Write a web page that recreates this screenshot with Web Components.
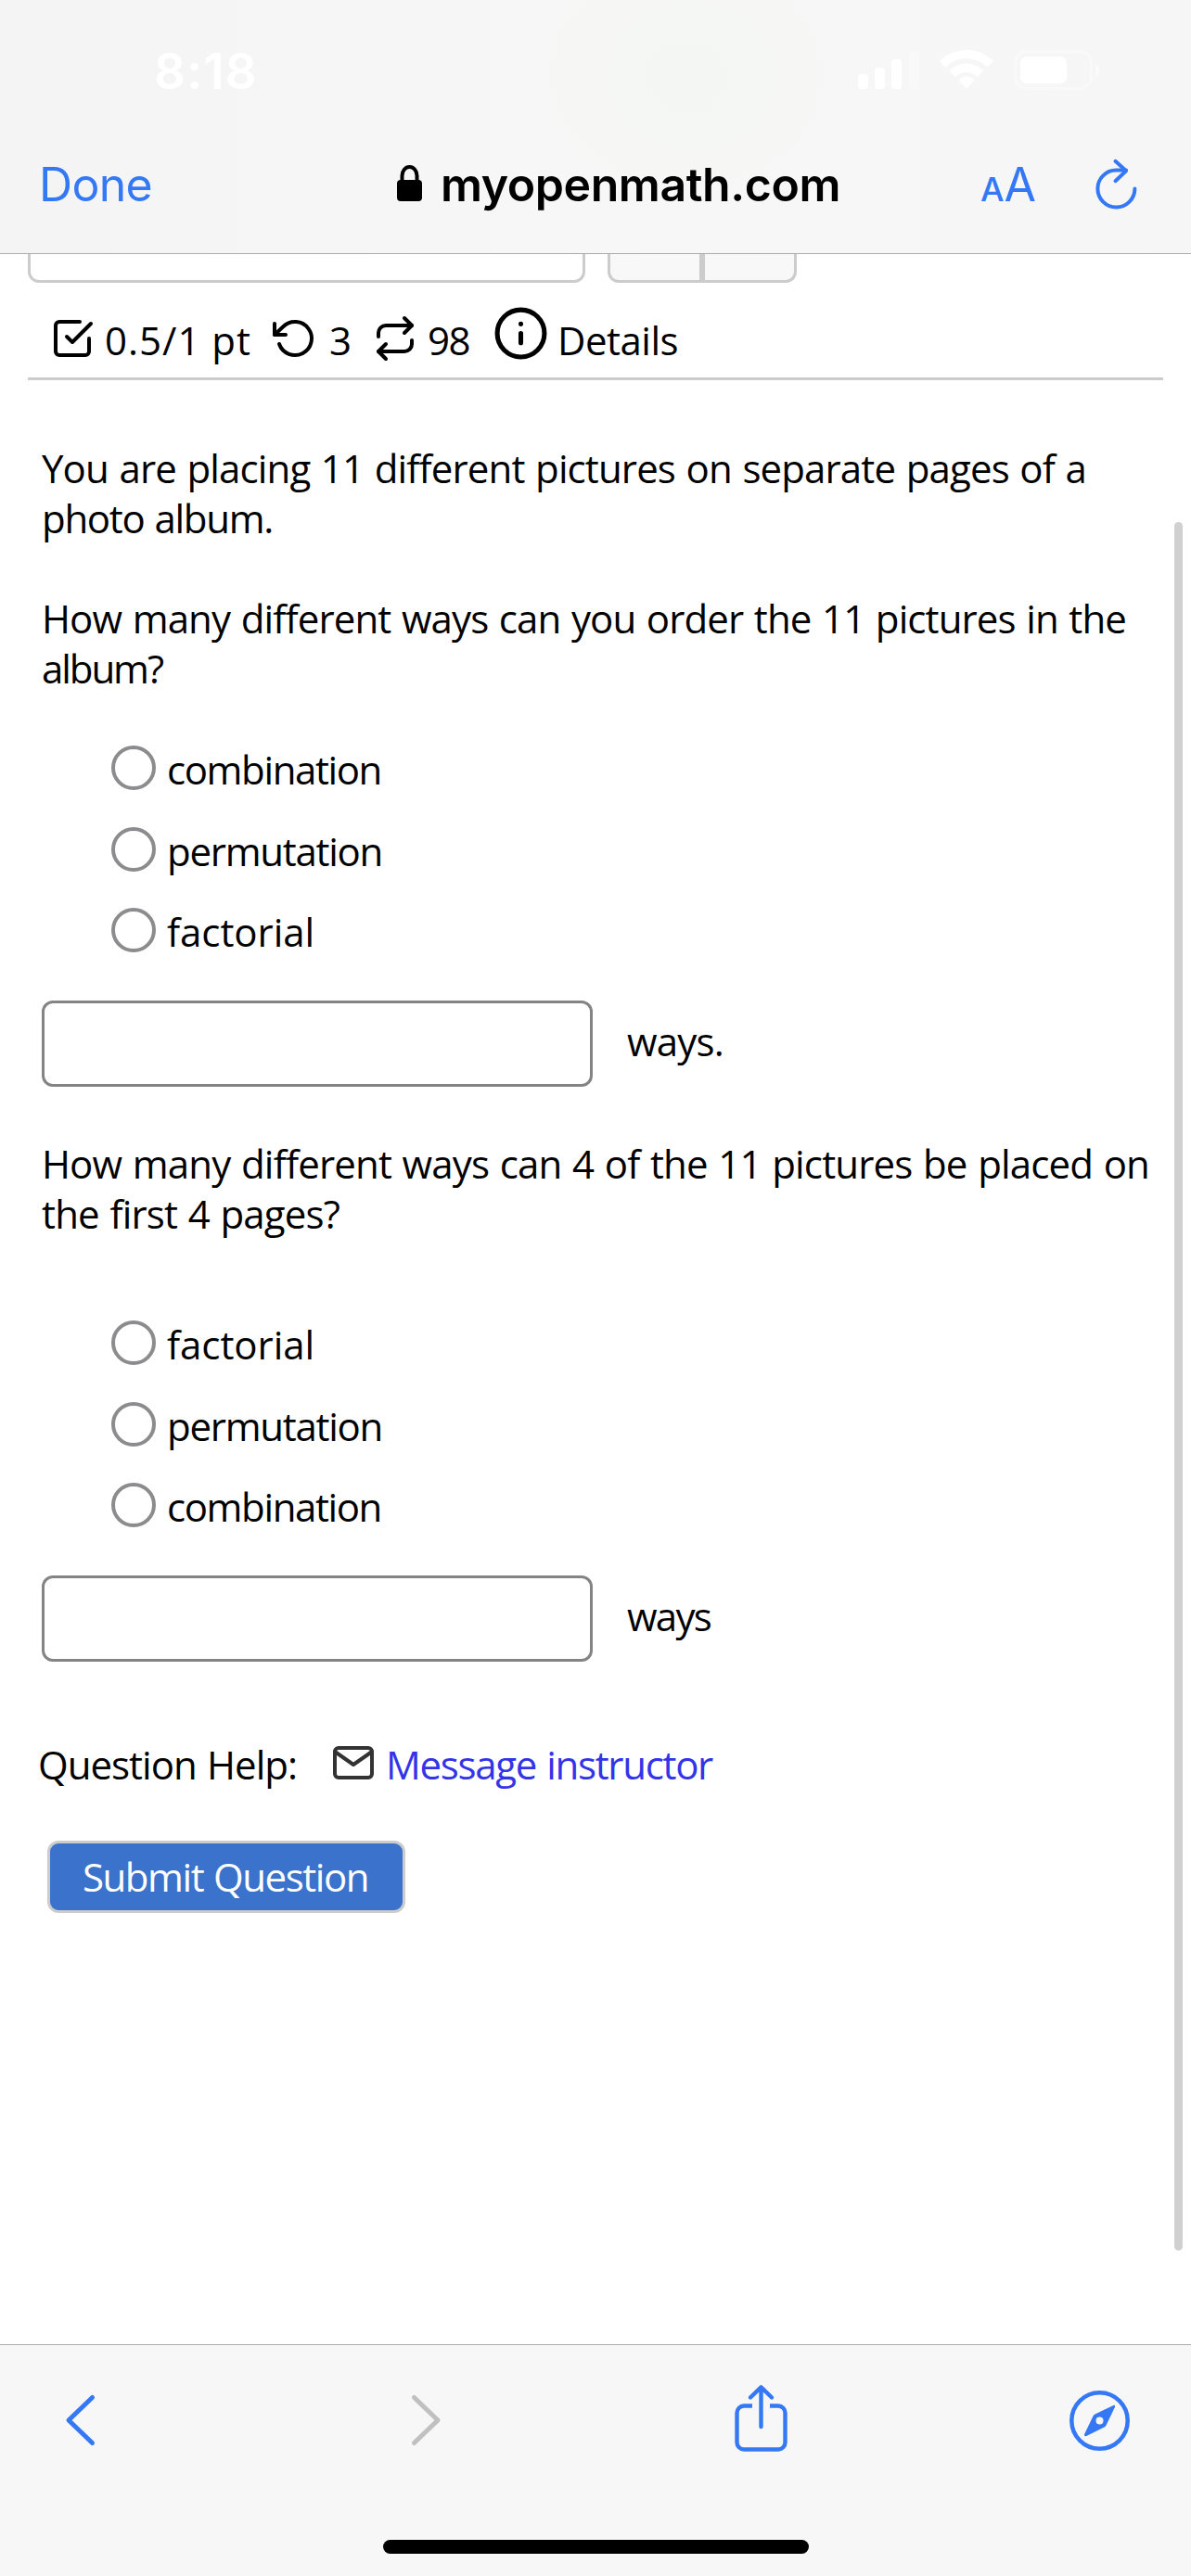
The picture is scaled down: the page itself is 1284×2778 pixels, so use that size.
<!DOCTYPE html>
<html lang="en">
<head>
<meta charset="utf-8">
<meta name="viewport" content="width=device-width, initial-scale=1">
<title>myopenmath.com</title>
<style>
  html, body {
    margin: 0;
    height: 100%;
    overflow: hidden;
    background: #fff;
  }
</style>
</head>
<body>
<browser-sheet>
  <browser-bar slot="top" time="8:18" site="myopenmath.com"></browser-bar>

  <question-picker></question-picker>
  <score-bar></score-bar>

  <question-text gap="68">
    <text-run width="1126">You are placing 11 different pictures on separate pages of a</text-run>
    <text-run width="249">photo album.</text-run>
  </question-text>
  <question-text gap="54">
    <text-run width="1169">How many different ways can you order the 11 pictures in the</text-run>
    <text-run width="130">album?</text-run>
  </question-text>
  <answer-choices gap="55">
    <answer-choice width="231">combination</answer-choice>
    <answer-choice width="232">permutation</answer-choice>
    <answer-choice width="159">factorial</answer-choice>
  </answer-choices>
  <answer-box><text-run width="104">ways.</text-run></answer-box>

  <question-text gap="56">
    <text-run width="1194">How many different ways can 4 of the 11 pictures be placed on</text-run>
    <text-run width="321">the first 4 pages?</text-run>
  </question-text>
  <answer-choices gap="87">
    <answer-choice width="159">factorial</answer-choice>
    <answer-choice width="232">permutation</answer-choice>
    <answer-choice width="231">combination</answer-choice>
  </answer-choices>
  <answer-box><text-run width="90">ways</text-run></answer-box>

  <question-help></question-help>
  <submit-button><text-run width="308">Submit Question</text-run></submit-button>

  <browser-toolbar slot="bottom"></browser-toolbar>
</browser-sheet>

<script>
const define = (name, html, setup) => {
  const template = document.createElement('template')
  template.innerHTML = html
  customElements.define(name, class extends HTMLElement {
    constructor() {
      super()
      this.attachShadow({ mode: 'open' }).appendChild(template.content.cloneNode(true))
    }

    $(selector) {
      return this.shadowRoot.querySelector(selector)
    }

    connectedCallback() {
      if (setup) setup(this)
    }
  })
}

const setGap = (el) => {
  el.style.paddingTop = el.getAttribute('gap') + 'px'
}

const ICONS = {
  check: ['0 0 24 24', 2, '<path d="M9 11l3 3L22 4"/><path d="M21 12v7a2 2 0 0 1-2 2H5a2 2 0 0 1-2-2V5a2 2 0 0 1 2-2h11"/>'],
  undo: ['0 0 24 24', 2, '<path d="M1 4v6h6"/><path d="M3.51 15a9 9 0 1 0 2.13-9.36L1 10"/>'],
  repeat: ['0 0 24 24', 2, '<path d="M17 1l4 4-4 4"/><path d="M3 11V9a4 4 0 0 1 4-4h14"/><path d="M7 23l-4-4 4-4"/><path d="M21 13v2a4 4 0 0 1-4 4H3"/>'],
  info: ['0 0 24 24', 2, '<circle cx="12" cy="12" r="10"/><path d="M12 16v-4M12 8h.01"/>'],
  mail: ['0 0 24 24', 2, '<path d="M4 4h16a2 2 0 0 1 2 2v12a2 2 0 0 1-2 2H4a2 2 0 0 1-2-2V6a2 2 0 0 1 2-2z"/><path d="M22 6l-10 7L2 6"/>'],
  lock: ['0 0 27 39', 4, '<path d="M5.5 18V11.500a8 9.500 0 0 1 16 0V18"/><rect x="0" y="16" width="27" height="23" rx="4" fill="currentColor" stroke="none"/>'],
  reload: ['0 0 48 56', 4, '<path d="M42.400 31.500a20 20 0 1 1-20-20H33"/><path d="M21.500 1.800L33 12.200L21.500 23.200"/>'],
  back: ['0 0 31 54', 5, '<path d="M28.500 2.500L3 27l25.500 24.500"/>'],
  forward: ['0 0 31 54', 5, '<path d="M2.500 2.500L28 27L2.500 51.500"/>'],
  share: ['0 0 57 72', 4.4, '<path stroke-linecap="butt" d="M19 22.500H10a7.500 7.500 0 0 0-7.500 7.500V62a7.500 7.500 0 0 0 7.500 7.500H47A7.500 7.500 0 0 0 54.500 62V30A7.500 7.500 0 0 0 47 22.500H38"/><path d="M28.500 45V3M17 13.500L28.500 2.300L40 13.500"/>'],
  compass: ['0 0 65 65', 4.500, '<circle cx="32.500" cy="32.500" r="30.200"/><path fill="currentColor" stroke="none" fill-rule="evenodd" d="M47.300 15.900Q49.600 15.200 49 17.700L39.500 37.500Q39 38.600 38 39.200L18.300 49Q15.500 49.700 16 47.200L25.500 27.500Q26 26.400 27 25.800ZM32.500 28.500a4 4 0 1 0 0 8a4 4 0 1 0 0-8Z"/>'],
  signal: ['0 0 66 42', 0, '<g fill="currentColor"><rect y="26" width="11" height="16" rx="3"/><rect x="18" y="19" width="11" height="23" rx="3"/><rect x="36" y="10" width="11" height="32" rx="3"/><rect x="55" y="1" width="11" height="41" rx="3" opacity=".3"/></g>'],
  wifi: ['0 0 58 42', 0, '<g fill="currentColor"><path d="M29 0C41 0 50.500 4.500 58 12L51.500 18.500C45 12.500 38 9 29 9S13 12.500 6.500 18.500L0 12C7.500 4.500 17 0 29 0Z"/><path d="M29 14.500c7.500 0 13.500 3 18.500 7.700L41 29c-3.500-3.500-7-5-12-5s-8.500 1.500-12 5l-6.500-6.800C15.500 17.500 21.500 14.500 29 14.500Z"/><path d="M29 28.500c3.500 0 6 1.500 8.500 4L29 42l-8.500-9.500c2.500-2.500 5-4 8.500-4Z"/></g>'],
  battery: ['0 0 94 43', 3, '<rect x="1.500" y="1.500" width="82" height="40" rx="12" opacity=".4"/><path d="M88 15q5 2 5 6.500t-5 6.500Z" fill="currentColor" stroke="none" opacity=".5"/><rect x="7" y="7" width="50" height="29" rx="7" fill="currentColor" stroke="none"/>']
}

define('line-icon', `
  <style>
    :host { display: block; flex: none; }
    svg {
      display: block;
      width: 100%;
      height: 100%;
      overflow: visible;
      fill: none;
      stroke: currentColor;
      stroke-linecap: round;
      stroke-linejoin: round;
    }
  </style>
  <svg xmlns="http://www.w3.org/2000/svg"></svg>
`, (el) => {
  const [viewBox, stroke, shapes] = ICONS[el.getAttribute('name')]
  const svg = el.$('svg')
  svg.setAttribute('viewBox', viewBox)
  svg.setAttribute('stroke-width', stroke)
  svg.innerHTML = shapes
  const [, , w, h] = viewBox.split(' ')
  const size = el.getAttribute('size')
  el.style.width = (size || w) + 'px'
  el.style.height = (size || h) + 'px'
})

define('browser-sheet', `
  <style>
    :host {
      display: flex;
      flex-direction: column;
      position: relative;
      height: 2778px;
      background: #fff;
      color: #000;
      font: 42px/54px "Trebuchet MS", "Open Sans", sans-serif;
      word-spacing: 1.500px;
    }
    main { flex: 1; min-height: 0; }
    /* overlay scroll indicator */
    .thumb {
      position: absolute;
      top: 563px;
      right: 9px;
      width: 9px;
      height: 1864px;
      border-radius: 5px;
      background: #d0d0d0;
    }
  </style>
  <slot name="top"></slot>
  <main><slot></slot></main>
  <slot name="bottom"></slot>
  <div class="thumb"></div>
`)

define('browser-bar', `
  <style>
    :host {
      display: block;
      box-sizing: border-box;
      height: 274px;
      border-bottom: 1px solid #acacac;
      background:
        radial-gradient(ellipse 230px 190px at 740px 80px, #f4f6f3, transparent),
        linear-gradient(90deg, #f5f4f5, #f7f7f7 50%, #f6f6f6);
      font-family: Inter, sans-serif;
    }
    .status {
      display: flex;
      align-items: flex-start;
      height: 149px;
      padding: 0 97px 0 166px;
      color: #fff;
    }
    .time {
      margin: 47px auto 0 0;
      font-size: 53px;
      font-weight: 600;
      line-height: 60px;
    }
    .status line-icon { margin-top: 54px; }
    .signal { margin-right: 22px; }
    .wifi { margin-right: 22px; }
    .row {
      display: flex;
      align-items: flex-start;
      padding-left: 42px;
      color: #3478f6;
      font-size: 50px;
      line-height: 60px;
    }
    .row text-run { margin-top: 20px; }
    .lock { margin: 29px 20px 0 264px; color: #000; }
    .site { color: #000; font-weight: 600; }
    .sizes {
      display: flex;
      align-items: baseline;
      width: 60px;
      margin: 20px 0 0 151px;
    }
    .small { font-size: 36px; width: 26px; font-weight: 500; }
    .large { font-size: 50px; }
    .reload { margin: 22.500px 0 0 64px; }
  </style>
  <div class="status">
    <text-run class="time" width="112"></text-run>
    <line-icon class="signal" name="signal"></line-icon>
    <line-icon class="wifi" name="wifi"></line-icon>
    <line-icon name="battery"></line-icon>
  </div>
  <div class="row">
    <text-run width="122">Done</text-run>
    <line-icon class="lock" name="lock"></line-icon>
    <text-run class="site" width="431"></text-run>
    <div class="sizes"><span class="small">A</span><span class="large">A</span></div>
    <line-icon class="reload" name="reload"></line-icon>
  </div>
`, (el) => {
  el.$('.time').textContent = el.getAttribute('time')
  el.$('.site').textContent = el.getAttribute('site')
})

// Lower edge of the question selector, the rest is scrolled under the bar
define('question-picker', `
  <style>
    :host {
      display: flex;
      height: 31px;
      padding-left: 30px;
    }
    div {
      box-sizing: border-box;
      border: 3px solid #ccc;
      border-top: 0;
    }
    .select {
      width: 601px;
      margin-right: 24px;
      border-radius: 0 0 12px 12px;
    }
    .prev, .next { width: 102px; background: #f8f8f8; }
    .prev { border-radius: 0 0 0 12px; }
    .next { border-radius: 0 0 12px 0; }
  </style>
  <div class="select"></div>
  <div class="prev"></div>
  <div class="next"></div>
`)

define('score-bar', `
  <style>
    :host {
      display: flex;
      align-items: flex-start;
      box-sizing: border-box;
      height: 105px;
      margin: 0 30px;
      padding: 35px 0 0 24px;
      border-bottom: 3px solid #ccc;
      word-spacing: 0;
    }
    line-icon { margin-top: 1px; }
    .points { margin: 0 23px 0 11px; }
    .tries { margin: 0 26px 0 13px; }
    .versions { margin: 0 25px 0 11px; }
    .info { margin: -11.500px 9px 0 0; }
  </style>
  <line-icon name="check" size="48"></line-icon>
  <text-run class="points" width="158">0.5/1 pt</text-run>
  <line-icon name="undo" size="48"></line-icon>
  <text-run class="tries" width="21">3</text-run>
  <line-icon name="repeat" size="48"></line-icon>
  <text-run class="versions" width="45">98</text-run>
  <line-icon class="info" name="info" size="61"></line-icon>
  <text-run width="130">Details</text-run>
`)

define('question-text', `
  <style>
    :host { display: block; padding-left: 45px; }
  </style>
  <slot></slot>
`, setGap)

define('answer-choices', `
  <style>
    :host { display: block; padding-left: 120px; }
  </style>
  <slot></slot>
`, setGap)

define('answer-choice', `
  <style>
    :host { display: flex; height: 87.500px; }
    i {
      box-sizing: border-box;
      width: 48px;
      height: 48px;
      margin: 1px 12px 0 0;
      border: 4px solid #8c8c8e;
      border-radius: 50%;
    }
  </style>
  <i></i>
  <text-run></text-run>
`, (el) => {
  const run = el.$('text-run')
  run.setAttribute('width', el.getAttribute('width'))
  run.textContent = el.textContent
})

define('answer-box', `
  <style>
    :host {
      display: flex;
      gap: 37px;
      padding: 13.500px 0 0 45px;
    }
    div {
      box-sizing: border-box;
      width: 594px;
      height: 93px;
      border: 3px solid #848484;
      border-radius: 12px;
    }
    ::slotted(text-run) { margin-top: 17px; }
  </style>
  <div></div>
  <slot></slot>
`)

define('question-help', `
  <style>
    :host {
      display: flex;
      padding: 84px 0 0 41px;
    }
    line-icon { margin: 1px 11px 0 37px; color: #333; }
    .link { color: #3333e8; }
  </style>
  <text-run width="279">Question Help:</text-run>
  <line-icon name="mail" size="48"></line-icon>
  <text-run class="link" width="352">Message instructor</text-run>
`)

define('submit-button', `
  <style>
    :host { display: block; padding: 55px 0 0 51px; }
    button {
      display: flex;
      box-sizing: border-box;
      width: 386px;
      height: 78px;
      margin: 0;
      padding: 9px 0 0 35px;
      border: 3px solid #ccc;
      border-radius: 12px;
      background: #3a72cc;
      color: #fff;
      font: inherit;
      word-spacing: inherit;
    }
  </style>
  <button><slot></slot></button>
`)

define('browser-toolbar', `
  <style>
    :host {
      display: flex;
      flex-direction: column;
      align-items: center;
      justify-content: space-between;
      box-sizing: border-box;
      height: 250px;
      padding-bottom: 24px;
      border-top: 1px solid #acacac;
      background: #f7f7f7;
      color: #3478f6;
    }
    nav {
      display: flex;
      align-items: center;
      box-sizing: border-box;
      width: 100%;
      padding: 43px 66px 0 71px;
    }
    .off { color: #c0c0c0; }
    .home {
      width: 459px;
      height: 15px;
      border-radius: 8px;
      background: #000;
    }
    .back { margin: 4px 342px 0 0; }
    .forward { margin: 4px 317px 0 0; }
    .compass { margin: 5px 0 0 304px; }
  </style>
  <nav>
    <line-icon class="back" name="back"></line-icon>
    <line-icon class="forward off" name="forward"></line-icon>
    <line-icon name="share"></line-icon>
    <line-icon class="compass" name="compass"></line-icon>
  </nav>
  <div class="home"></div>
`)

// A single line of text, tracked so that it fills the given width.
// Defined last: it measures itself, so the fonts around it have to be in place.
define('text-run', `
  <style>
    :host {
      display: block;
      flex: none;
      white-space: nowrap;
    }
    span { display: inline-block; }
  </style>
  <span><slot></slot></span>
`, (el) => {
  const width = Number(el.getAttribute('width'))
  const count = el.textContent.trim().length
  const natural = el.$('span').getBoundingClientRect().width
  if (width && count) {
    el.style.width = width + 'px'
    el.style.letterSpacing = (width - natural) / count + 'px'
  }
})
</script>
</body>
</html>
